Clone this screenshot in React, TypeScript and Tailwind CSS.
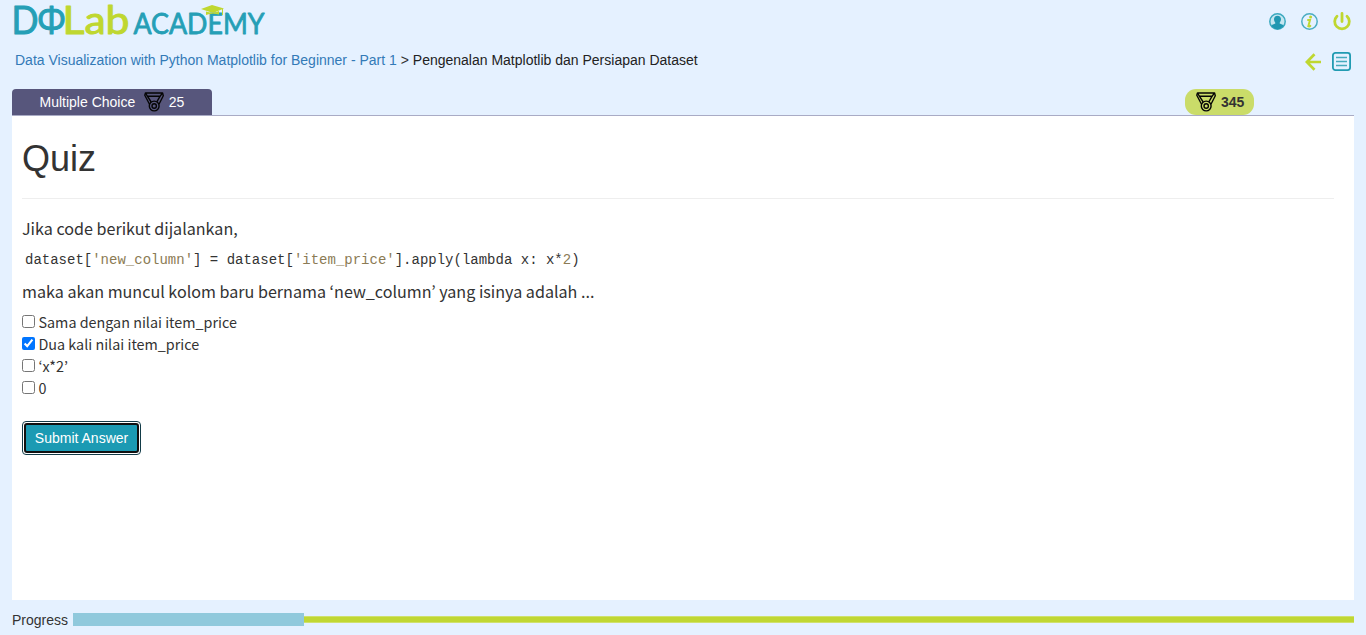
import React from 'react';

function Logo() {
  return (
    <svg width="256" height="42" viewBox="12 0 256 42" className="block overflow-visible" fontFamily="Lato, 'Open Sans', sans-serif" strokeLinejoin="round">
      <g fill="#259fb6" stroke="#259fb6">
        <text x="11.500" y="34.300" fontSize="39" strokeWidth="1" textLength="27" lengthAdjust="spacingAndGlyphs">D</text>
        <text x="37" y="34.300" fontSize="38" strokeWidth="1" fontFamily="'Open Sans', sans-serif" textLength="29" lengthAdjust="spacingAndGlyphs">Φ</text>
        <text x="133.500" y="34.300" fontSize="28" strokeWidth="0.800" textLength="131" lengthAdjust="spacingAndGlyphs">ACADEMY</text>
      </g>
      <text x="62.500" y="34.300" fontSize="39" fill="#bfd730" stroke="#bfd730" strokeWidth="1" textLength="67" lengthAdjust="spacingAndGlyphs">Lab</text>
      <path d="M201 9 L212 5 L224 8.500 L213 13 Z" fill="#bfd730" />
      <path d="M206 11.500 V15 Q212 13 219 14.500 V11 L213 13.300 Z" fill="#bfd730" />
      <path d="M222.500 9 V15" stroke="#bfd730" strokeWidth="1" />
    </svg>
  );
}

function Medal() {
  return (
    <svg width="20" height="20" viewBox="0 0 20 20" fill="none" stroke="#050505" strokeWidth="1.400" strokeLinejoin="round" className="block shrink-0">
      <path d="M1.500 1 H18.500 L16 4.300 H3.500 Z" />
      <path d="M1.500 1 L0.800 3.300 L5.500 12.300 M3.500 4.300 L7.200 10 M18.500 1 L19.300 3.800 L15 12.300 M16 4.300 L12.800 9.800" />
      <circle cx="10.200" cy="14" r="4.900" />
      <circle cx="10.200" cy="14" r="2.200" />
    </svg>
  );
}

function UserIcon() {
  return (
    <svg width="17" height="17" viewBox="0 0 17 17">
      <circle cx="8.500" cy="8.500" r="7.700" fill="#c5e6f0" stroke="#3ba9bf" strokeWidth="1.500" />
      <path d="M5 6 C5 1.500 12 1.500 12 6 C12 8 11.100 9 10.700 9.700 V10.500 L14.200 12.100 V13.500 Q8.500 19 2.800 13.500 V12.100 L6.300 10.500 V9.700 C5.700 8.900 5 7.800 5 6Z" fill="#2097b1" />
    </svg>
  );
}

function InfoIcon() {
  return (
    <svg width="17" height="17" viewBox="0 0 17 17">
      <circle cx="8.500" cy="8.500" r="7.700" fill="none" stroke="#4badc2" strokeWidth="1.500" />
      <circle cx="9.600" cy="3.900" r="1.500" fill="#bfd730" />
      <path d="M7 7 H9 L7.300 13.300 Q8 13.900 9.300 12.900" fill="none" stroke="#bfd730" strokeWidth="2" strokeLinecap="round" />
    </svg>
  );
}

function PowerIcon() {
  return (
    <svg width="18" height="19" viewBox="0 0 18 19" fill="none" stroke="#bfd730" strokeWidth="2.800" strokeLinecap="round">
      <path d="M9 1.500 V9.500 M4 4.200 A7.300 7.300 0 1 0 14 4.200" />
    </svg>
  );
}

function BackIcon() {
  return (
    <svg width="17" height="18" viewBox="0 0 17 18" fill="none" stroke="#bfd730" strokeWidth="2.700">
      <path d="M16 9 H2 M9.500 1.200 L1.800 9 L9.500 16.800" />
    </svg>
  );
}

function ListIcon() {
  return (
    <svg width="19" height="19" viewBox="0 0 19 19" fill="none" stroke="#219bb2">
      <rect x="0.900" y="0.900" width="17.200" height="17.200" rx="2.500" strokeWidth="1.800" />
      <path d="M4 5.500 H15 M4 9.500 H15 M4 13.500 H15" strokeWidth="1.400" stroke="#45aabd" />
    </svg>
  );
}

const answers = ['Sama dengan nilai item_price', 'Dua kali nilai item_price', '‘x*2’', '0'];

function Answer({ label, checked, onToggle }: { label: string; checked: boolean; onToggle: () => void }) {
  return (
    <label className="flex h-[22px] items-center">
      <input type="checkbox" checked={checked} onChange={onToggle} className="mr-[3.5px] mb-[2px] size-[13px] shrink-0" />
      <span className="whitespace-nowrap font-['Noto_Sans_CJK_KR',sans-serif] text-[14.35px] leading-[22px]">{label}</span>
    </label>
  );
}

export default function App() {
  const [selected, setSelected] = React.useState([1]);
  const toggle = (i: number) =>
    setSelected(selected.includes(i) ? selected.filter((n) => n !== i) : [...selected, i]);

  return (
    <div className="flex h-[635px] w-full flex-col overflow-hidden bg-[#e5f1ff] px-3 font-['Liberation_Sans',Arial,sans-serif] text-sm leading-5 text-[#333]">
      <header className="flex h-[42px] shrink-0 items-start justify-between pr-[3px]">
        <Logo />
        <div className="flex items-center gap-[15px] pt-[12px]">
          <UserIcon />
          <InfoIcon />
          <PowerIcon />
        </div>
      </header>
      <nav className="flex h-[47px] shrink-0 items-start justify-between pr-[3px] pl-[3px]">
        <div className="pt-2 whitespace-nowrap">
          <a className="text-[#337ab7]">Data Visualization with Python Matplotlib for Beginner - Part 1</a>{' > '}
          <span className="text-[#222]">Pengenalan Matplotlib dan Persiapan Dataset</span>
        </div>
        <div className="flex items-center gap-[10px] pt-[10px]">
          <BackIcon />
          <ListIcon />
        </div>
      </nav>
      <div className="flex h-[27px] shrink-0 items-start justify-between border-b border-[#a9abc5]">
        <div className="flex h-[26px] w-[200px] items-center rounded-t bg-[#57567c] pl-[27.5px] text-white">
          <span className="mr-[8.5px]">Multiple Choice</span>
          <Medal />
          <span className="ml-[5px]">25</span>
        </div>
        <div className="mr-[100px] flex h-[26px] w-[69px] items-center rounded-[11px] bg-[#cadc69] pl-[11px] font-bold">
          <Medal />
          <span className="ml-[5px]">345</span>
        </div>
      </div>
      <main className="h-[484px] shrink-0 bg-white pt-[23px] pr-5 pl-[10px]">
        <h1 className="text-[36px] leading-[40px]">Quiz</h1>
        <hr className="mt-[19px] mb-[17px] border-[#eee]" />
        <p className="font-['Noto_Sans_CJK_KR',sans-serif] text-[16.12px] leading-6">Jika code berikut dijalankan,</p>
        <pre className="mt-[10px] pl-[3px] font-['Liberation_Mono',monospace] text-sm leading-5">
          dataset[<span className="text-[#8b7b55]">'new_column'</span>] = dataset[<span className="text-[#8b7b55]">'item_price'</span>].apply(lambda x: x*<span className="text-[#8b7b55]">2</span>)
        </pre>
        <p className="mt-[9px] font-['Noto_Sans_CJK_KR',sans-serif] text-[16.12px] leading-6">maka akan muncul kolom baru bernama ‘new_column’ yang isinya adalah ...</p>
        <div className="mt-[8px]">
          {answers.map((label, i) => (
            <Answer key={label} label={label} checked={selected.includes(i)} onToggle={() => toggle(i)} />
          ))}
        </div>
        <button className="mt-[22px] flex h-[34px] w-[119px] items-center justify-center rounded border border-[#123b48] bg-white p-px">
          <span className="flex size-full items-center justify-center rounded-[3px] border-2 border-[#101010] bg-[#1b9ab3] whitespace-nowrap text-white">Submit Answer</span>
        </button>
      </main>
      <footer className="flex h-[35px] shrink-0 items-center pt-1">
        <span className="w-[61px]">Progress</span>
        <div className="h-[13px] w-[231px] bg-[#90c9dc]" />
        <div className="h-[7px] flex-1 border-y border-[#cfe16c] bg-[#c0d733]" />
      </footer>
    </div>
  );
}
